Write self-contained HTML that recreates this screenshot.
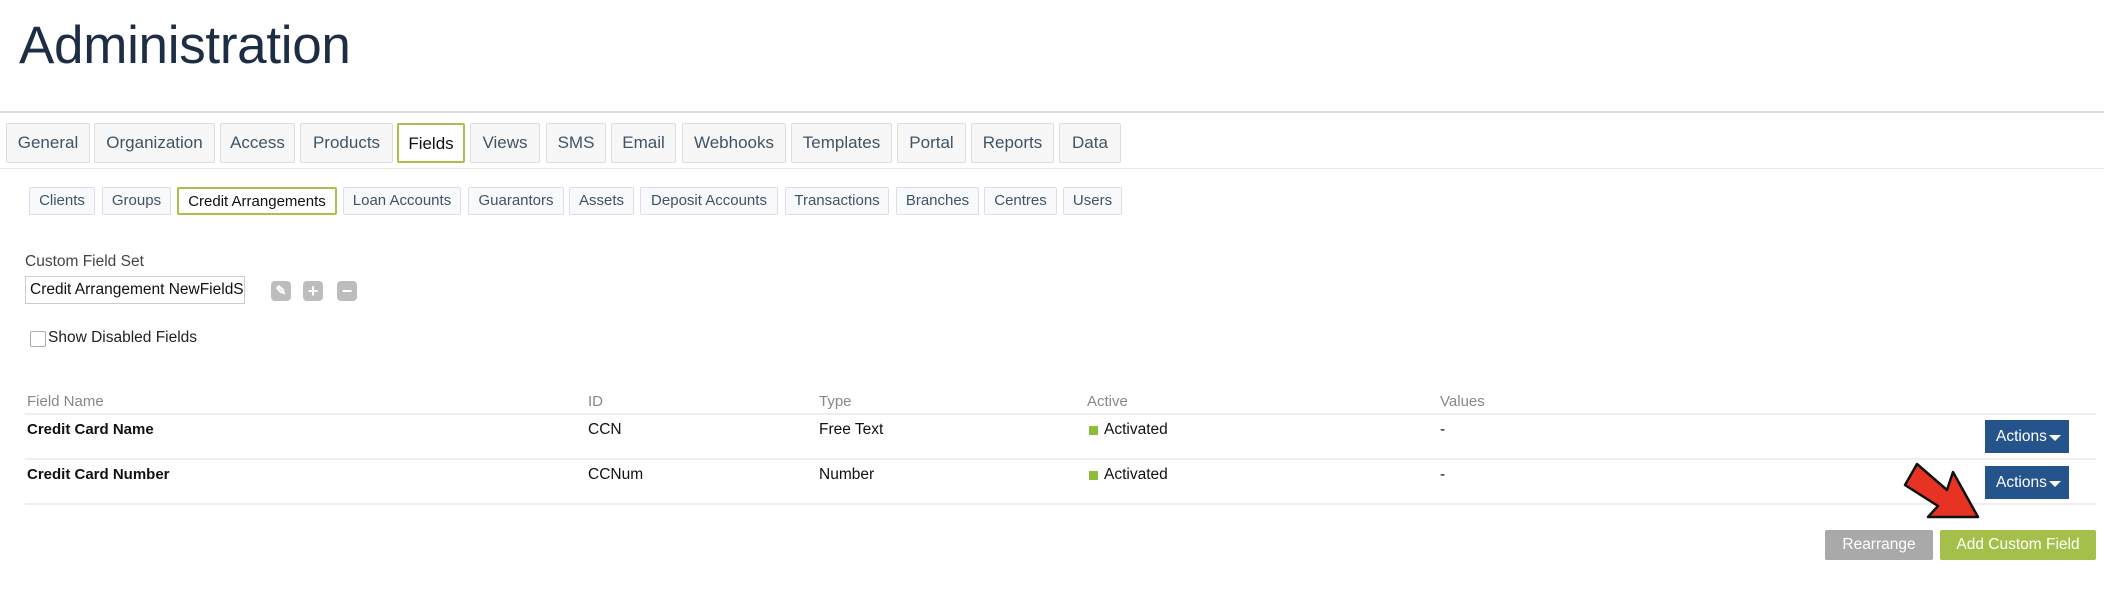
<!DOCTYPE html>
<html><head><meta charset="utf-8"><style>
body{margin:0;width:2104px;height:596px;background:#fff;font-family:"Liberation Sans",sans-serif;position:relative;overflow:hidden}
.a{position:absolute}
h1{position:absolute;left:19px;top:15px;margin:0;font-weight:normal;font-size:53px;color:#1d2d44;letter-spacing:-0.3px}
.hr{position:absolute;left:0;width:2104px;height:2px;background:#ddd}
.t{position:absolute;top:123px;line-height:38px;text-align:center;background:#f7f7f7;border:1px solid #ddd;border-radius:2px;color:#3e5468;font-size:17px;box-sizing:border-box;height:40px}
.t.on{background:#fff;border:2px solid #a6c24c;color:#111}
.s{position:absolute;top:187px;height:28px;line-height:26px;text-align:center;background:#f8f9fa;border:1px solid #dde;border-radius:2px;color:#3e5468;font-size:15px;box-sizing:border-box}
.s.on{background:#fff;border:2px solid #a6c24c;color:#111}
.ic{position:absolute;top:281px;width:20px;height:20px;border-radius:4px;background:#bdbdbd;color:#fff;font-weight:bold;text-align:center;line-height:20px;font-size:18px}
.th{position:absolute;top:393px;color:#888;font-size:15px}
.td{position:absolute;font-size:15.5px;color:#111}
.line{position:absolute;left:25px;width:2071px;height:2px;background:#eee}
.act{position:absolute;left:1985px;width:84px;height:33px;background:#25548c;color:#fff;font-size:15.5px;line-height:33px;box-sizing:border-box;padding-left:11px}
.act:after{content:"";position:absolute;right:8px;top:15px;border-left:6px solid transparent;border-right:6px solid transparent;border-top:6px solid #fff}
.sq{position:absolute;left:1089px;width:9px;height:9px;background:#8fbb3a}
</style></head><body>
<h1>Administration</h1>
<div class="hr" style="top:111px"></div>
<div class="hr" style="top:168px;height:1px;background:#e8ead8"></div>
<div class="t" style="left:6px;width:84px">General</div>
<div class="t" style="left:94px;width:121px">Organization</div>
<div class="t" style="left:220px;width:75px">Access</div>
<div class="t" style="left:300px;width:93px">Products</div>
<div class="t on" style="left:397px;width:68px">Fields</div>
<div class="t" style="left:470px;width:70px">Views</div>
<div class="t" style="left:546px;width:60px">SMS</div>
<div class="t" style="left:611px;width:65px">Email</div>
<div class="t" style="left:682px;width:104px">Webhooks</div>
<div class="t" style="left:791px;width:101px">Templates</div>
<div class="t" style="left:897px;width:69px">Portal</div>
<div class="t" style="left:971px;width:83px">Reports</div>
<div class="t" style="left:1059px;width:62px">Data</div>
<div class="s" style="left:29px;width:66px">Clients</div>
<div class="s" style="left:102px;width:69px">Groups</div>
<div class="s on" style="left:177px;width:160px">Credit Arrangements</div>
<div class="s" style="left:343px;width:118px">Loan Accounts</div>
<div class="s" style="left:468px;width:96px">Guarantors</div>
<div class="s" style="left:569px;width:65px">Assets</div>
<div class="s" style="left:640px;width:138px">Deposit Accounts</div>
<div class="s" style="left:785px;width:104px">Transactions</div>
<div class="s" style="left:896px;width:83px">Branches</div>
<div class="s" style="left:984px;width:73px">Centres</div>
<div class="s" style="left:1063px;width:59px">Users</div>
<div class="a" style="left:25px;top:253px;font-size:15.5px;color:#444">Custom Field Set</div>
<div class="a" style="left:25px;top:276px;width:220px;height:28px;border:1px solid #ccc;box-sizing:border-box;font-size:15.5px;line-height:26px;padding-left:4px;white-space:nowrap;overflow:hidden;color:#111">Credit Arrangement NewFieldSet</div>
<div class="ic" style="left:271px;font-size:13px">✎</div>
<div class="ic" style="left:303px">+</div>
<div class="ic" style="left:337px">−</div>
<div class="a" style="left:30px;top:331px;width:14px;height:14px;border:1px solid #aaa;border-radius:2px"></div>
<div class="a" style="left:48px;top:329px;font-size:15.5px;color:#222">Show Disabled Fields</div>
<div class="th" style="left:27px">Field Name</div>
<div class="th" style="left:588px">ID</div>
<div class="th" style="left:819px">Type</div>
<div class="th" style="left:1087px">Active</div>
<div class="th" style="left:1440px">Values</div>
<div class="line" style="top:413px"></div>
<div class="td" style="left:27px;top:421px;font-weight:bold;font-size:15px">Credit Card Name</div>
<div class="td" style="left:588px;top:421px">CCN</div>
<div class="td" style="left:819px;top:421px">Free Text</div>
<div class="sq" style="top:426px"></div>
<div class="td" style="left:1104px;top:421px">Activated</div>
<div class="td" style="left:1440px;top:421px">-</div>
<div class="act" style="top:420px">Actions</div>
<div class="line" style="top:458px"></div>
<div class="td" style="left:27px;top:466px;font-weight:bold;font-size:15px">Credit Card Number</div>
<div class="td" style="left:588px;top:466px">CCNum</div>
<div class="td" style="left:819px;top:466px">Number</div>
<div class="sq" style="top:471px"></div>
<div class="td" style="left:1104px;top:466px">Activated</div>
<div class="td" style="left:1440px;top:466px">-</div>
<div class="act" style="top:466px">Actions</div>
<div class="line" style="top:503px"></div>
<svg class="a" style="left:1900px;top:460px" width="90" height="70" viewBox="0 0 90 70"><path d="M17 4 L47 30 L53 12 L78 57 L28 57 L38 46 L5 25 Z" fill="#e63323" stroke="#111" stroke-width="2.5" stroke-linejoin="round"/></svg>
<div class="a" style="left:1825px;top:530px;width:108px;height:30px;background:#a9a9a9;border-radius:2px;color:#fff;font-size:15.5px;line-height:30px;text-align:center">Rearrange</div>
<div class="a" style="left:1940px;top:530px;width:156px;height:30px;background:#a5c04a;border-radius:2px;color:#fff;font-size:15.5px;line-height:30px;text-align:center">Add Custom Field</div>
</body></html>
